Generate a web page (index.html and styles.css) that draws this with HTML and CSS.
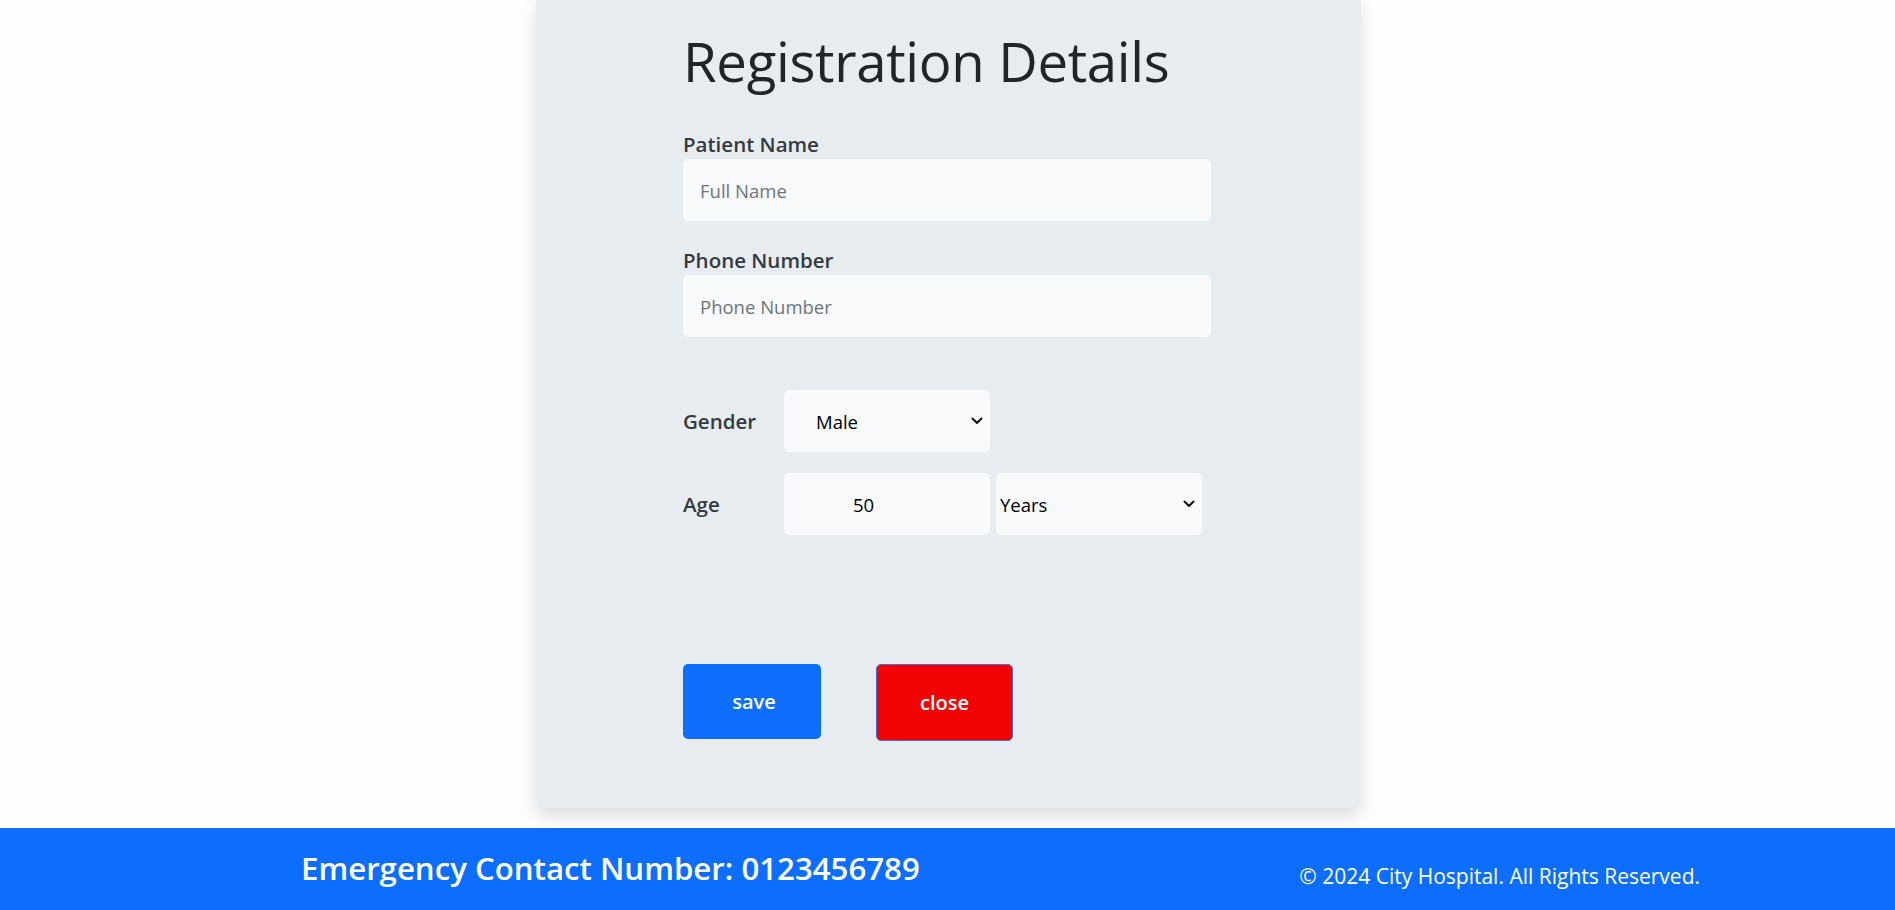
FILE: index.html
```html
<!DOCTYPE html>
<html lang="en">
<head>
<meta charset="utf-8">
<title>Registration Details</title>
<link rel="stylesheet" href="styles.css">
</head>
<body>
<main class="page">
  <section class="card">
    <h1 class="title">Registration Details</h1>
    <form class="form">
      <div class="group">
        <label class="label" for="name">Patient Name</label>
        <input class="field" id="name" type="text" placeholder="Full Name">
      </div>
      <div class="group group-next">
        <label class="label" for="phone">Phone Number</label>
        <input class="field" id="phone" type="text" placeholder="Phone Number">
      </div>
      <div class="rows">
        <div class="row">
          <span class="row-label">Gender</span>
          <div class="select-wrap">
            <select class="select select-gender">
              <option>Male</option>
              <option>Female</option>
            </select>
            <svg class="chev" width="12" height="8" viewBox="0 0 12 8"><path d="M1.5 1.5 6 6l4.5-4.5" fill="none" stroke="#111" stroke-width="2" stroke-linecap="round" stroke-linejoin="round"/></svg>
          </div>
        </div>
        <div class="row">
          <span class="row-label">Age</span>
          <input class="select age-input" type="text" value="50">
          <div class="select-wrap">
            <select class="select select-unit">
              <option>Years</option>
              <option>Months</option>
            </select>
            <svg class="chev" width="12" height="8" viewBox="0 0 12 8"><path d="M1.5 1.5 6 6l4.5-4.5" fill="none" stroke="#111" stroke-width="2" stroke-linecap="round" stroke-linejoin="round"/></svg>
          </div>
        </div>
      </div>
      <div class="actions">
        <button type="button" class="btn btn-save">save</button>
        <button type="button" class="btn btn-close">close</button>
      </div>
    </form>
  </section>
</main>
<footer class="footer">
  <h4 class="emergency">Emergency Contact Number: 0123456789</h4>
  <p class="copy">© 2024 City Hospital. All Rights Reserved.</p>
</footer>
</body>
</html>
```
FILE: styles.css
```css
* { box-sizing: border-box; }

html, body {
  margin: 0;
  padding: 0;
}

body {
  background: #fdfdfd;
  font-family: "Segoe UI", "Open Sans", "Noto Sans", sans-serif;
  color: #212529;
}

.page {
  display: flex;
  justify-content: center;
}

.card {
  width: 825px;
  margin-left: 2px;
  background: #e7ecf0;
  border-radius: 0 0 12px 12px;
  box-shadow: 0 8px 16px rgba(0, 0, 0, 0.13);
  padding: 28px 0 67px 147px;
}

.title {
  margin: 0 0 34px;
  font-size: 54.5px;
  font-weight: 530;
  line-height: 67px;
  color: #212529;
  letter-spacing: -0.3px;
}

.form {
  width: 528px;
  display: flex;
  flex-direction: column;
}

.group {
  display: flex;
  flex-direction: column;
}

.group-next { margin-top: 24px; }

.label {
  font-size: 20.5px;
  font-weight: 600;
  line-height: 30px;
  color: #343a40;
  height: 30px;
}

.field {
  height: 62px;
  border: none;
  border-radius: 5px;
  background: #f8f9fa;
  padding: 0 17px;
  font-family: inherit;
  font-size: 18.5px;
  color: #212529;
  outline: none;
}

.field::placeholder { color: #6c757d; }

.rows {
  margin-top: 53px;
  display: flex;
  flex-direction: column;
  gap: 21px;
}

.row {
  display: flex;
  align-items: center;
}

.row-label {
  width: 101px;
  font-size: 20.5px;
  font-weight: 600;
  color: #343a40;
}

.select-wrap {
  position: relative;
  display: flex;
}

.select {
  width: 206px;
  height: 62px;
  border: none;
  border-radius: 5px;
  background: #f8f9fa;
  font-family: inherit;
  font-size: 18.5px;
  color: #000;
  appearance: none;
  -webkit-appearance: none;
  outline: none;
}

.select-gender { padding-left: 32px; }

.age-input {
  padding-left: 69px;
  margin-right: 6px;
}

.select-unit { padding-left: 4px; }

.chev {
  position: absolute;
  right: 7px;
  top: 27px;
  pointer-events: none;
}

.actions {
  margin-top: 129px;
  display: flex;
  align-items: flex-start;
  gap: 55px;
}

.btn {
  border-radius: 5px;
  font-family: inherit;
  font-size: 20px;
  font-weight: 600;
  color: #fff;
  cursor: pointer;
}

.btn-save {
  width: 138px;
  height: 75px;
  background: #0d6efd;
  border: none;
  padding-left: 10px;
}

.btn-close {
  width: 137px;
  height: 77px;
  background: #f20404;
  border: 1px solid #3b6fe0;
}

.footer {
  margin-top: 20px;
  height: 82px;
  background: #0d6efd;
  color: #fff;
  display: flex;
  align-items: center;
  justify-content: space-between;
  padding: 0 195px 0 301px;
}

.emergency {
  margin: 0;
  font-size: 31.2px;
  font-weight: 600;
  line-height: 1.2;
}

.copy {
  margin: 16px 0 0;
  font-size: 21px;
  line-height: 1.5;
}
```
